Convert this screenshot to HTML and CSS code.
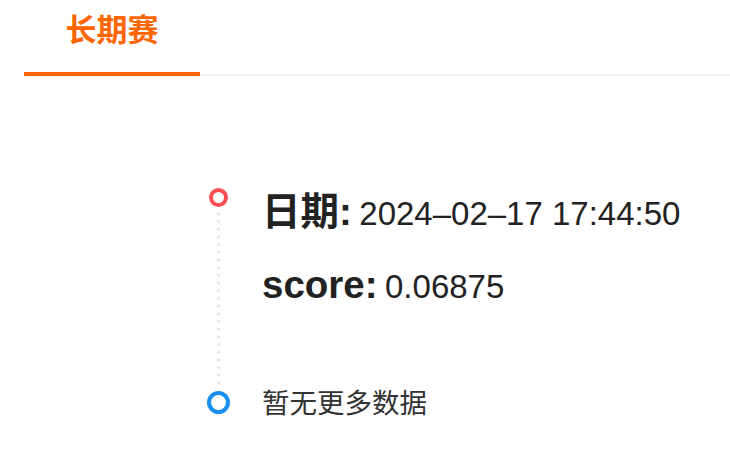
FILE: index.html
```html
<!DOCTYPE html>
<html lang="zh-CN">
<head>
<meta charset="utf-8">
<title>长期赛</title>
<link rel="stylesheet" href="styles.css">
</head>
<body>
<div class="tabs">
  <div class="tab active">长期赛</div>
</div>
<div class="timeline">
  <div class="item">
    <div class="rail">
      <span class="dot red"></span>
      <span class="line"></span>
    </div>
    <div class="content">
      <p class="row"><b class="label">日期:</b> <span class="value">2024–02–17 17:44:50</span></p>
      <p class="row"><b class="label">score:</b> <span class="value">0.06875</span></p>
    </div>
  </div>
  <div class="item last">
    <div class="rail">
      <span class="dot blue"></span>
    </div>
    <div class="content">
      <p class="empty">暂无更多数据</p>
    </div>
  </div>
</div>
</body>
</html>
```

FILE: styles.css
```css
* { box-sizing: border-box; }
html, body {
  margin: 0;
  padding: 0;
  background: #fff;
  font-family: "Liberation Sans", "Noto Sans CJK SC", sans-serif;
  color: #222;
}
.tabs {
  margin-left: 24px;
  display: flex;
  border-bottom: 2px solid #eeeeee;
  height: 76px;
}
.tab {
  width: 176px;
  height: 76px;
  margin-bottom: -2px;
  padding-top: 13px;
  text-align: center;
  font-size: 31px;
  line-height: 36px;
  font-weight: 700;
  color: #ff6600;
}
.tab.active { border-bottom: 4px solid #ff6600; }

.timeline {
  margin-top: 112px;
  padding-left: 206px;
}
.item {
  display: flex;
  gap: 32px;
}
.rail {
  width: 24px;
  flex: none;
  display: flex;
  flex-direction: column;
  align-items: center;
}
.dot {
  display: block;
  border-radius: 50%;
  flex: none;
  background: #fff;
}
.dot.red {
  width: 19px;
  height: 19px;
  border: 4px solid #ff4d51;
}
.dot.blue {
  width: 23px;
  height: 23px;
  border: 4px solid #1a8ff0;
}
.line {
  flex: 1;
  width: 3px;
  margin-top: 3px;
  margin-bottom: 6px;
  background-image: radial-gradient(circle, #e4e4e4 1.4px, transparent 1.6px);
  background-size: 3px 7.7px;
  background-repeat: repeat-y;
}
.content {
  padding-top: 2px;
  padding-bottom: 55px;
}
.row {
  margin: 0 0 21px;
  line-height: 44px;
  white-space: nowrap;
}
.label {
  font-size: 38.5px;
  font-weight: 700;
  color: #222;
}
.value {
  margin-left: 3px;
  font-size: 33px;
  font-weight: 400;
  color: #222;
}
.item.last .content { padding-top: 0; padding-bottom: 0; }
.empty {
  margin: 0;
  font-size: 27.5px;
  line-height: 26px;
  color: #333;
}
```
